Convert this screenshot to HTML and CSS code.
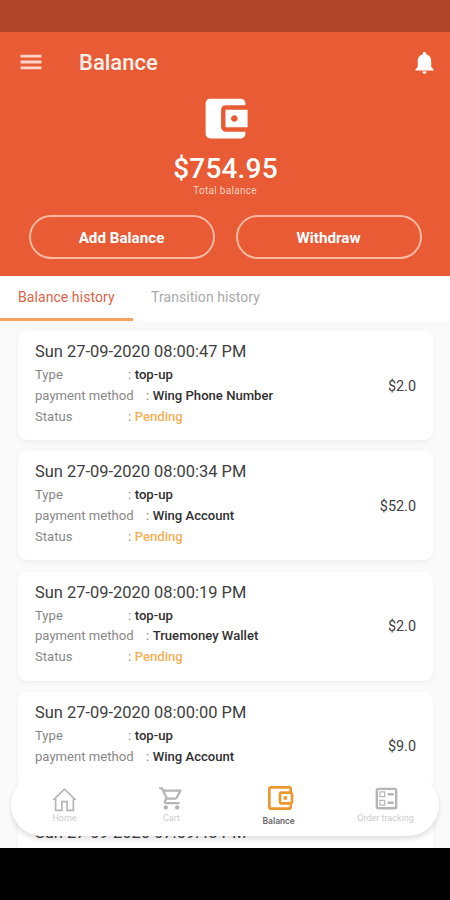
FILE: index.html
```html
<!DOCTYPE html>
<html lang="en">
<head>
<meta charset="utf-8">
<title>Balance</title>
<link rel="stylesheet" href="styles.css">
</head>
<body>
<div class="screen">
  <div class="status"></div>
  <header class="hero">
    <div class="appbar">
      <svg class="menu" viewBox="0 0 24 24"><path d="M3 18.300h18v-2.500H3v2.500zm0-5.050h18v-2.500H3v2.500zm0-7.550v2.500h18V5.700H3z"/></svg>
      <h1>Balance</h1>
      <svg class="bell" viewBox="0 0 24 24"><path d="M12 22c1.1 0 2-.9 2-2h-4c0 1.1.89 2 2 2zm6-6v-5c0-3.07-1.64-5.64-4.5-6.32V4c0-.83-.67-1.5-1.5-1.5s-1.5.67-1.5 1.5v.68C7.63 5.36 6 7.92 6 11v5l-2 2v1h16v-1l-2-2z"/></svg>
    </div>
    <div class="total">
      <svg viewBox="0 0 24 24"><path d="M21 18v1c0 1.1-.9 2-2 2H5c-1.11 0-2-.9-2-2V5c0-1.1.89-2 2-2h14c1.1 0 2 .9 2 2v1h-9c-1.11 0-2 .9-2 2v8c0 1.1.89 2 2 2h9zm-9-2h10V8H12v8zm4-2.5c-.83 0-1.5-.67-1.5-1.5s.67-1.5 1.5-1.5 1.5.67 1.5 1.5-.67 1.5-1.5 1.5z"/></svg>
      <div class="amount">$754.95</div>
      <div class="caption">Total balance</div>
    </div>
    <div class="actions"><button>Add Balance</button><button>Withdraw</button></div>
  </header>
  <nav class="tabs"><div class="tab active">Balance history</div><div class="tab">Transition history</div></nav>
  <main class="list">
    <article class="card"><div><h2>Sun 27-09-2020 08:00:47 PM</h2><p><span class="label">Type</span><i>:</i><b>top-up</b></p><p><span class="label wide">payment method</span><i>:</i><b>Wing Phone Number</b></p><p><span class="label">Status</span><i>:</i><b class="pending">Pending</b></p></div><div class="price">$2.0</div></article>
    <article class="card"><div><h2>Sun 27-09-2020 08:00:34 PM</h2><p><span class="label">Type</span><i>:</i><b>top-up</b></p><p><span class="label wide">payment method</span><i>:</i><b>Wing Account</b></p><p><span class="label">Status</span><i>:</i><b class="pending">Pending</b></p></div><div class="price">$52.0</div></article>
    <article class="card"><div><h2>Sun 27-09-2020 08:00:19 PM</h2><p><span class="label">Type</span><i>:</i><b>top-up</b></p><p><span class="label wide">payment method</span><i>:</i><b>Truemoney Wallet</b></p><p><span class="label">Status</span><i>:</i><b class="pending">Pending</b></p></div><div class="price">$2.0</div></article>
    <article class="card"><div><h2>Sun 27-09-2020 08:00:00 PM</h2><p><span class="label">Type</span><i>:</i><b>top-up</b></p><p><span class="label wide">payment method</span><i>:</i><b>Wing Account</b></p></div><div class="price">$9.0</div></article>
    <article class="card"><div><h2>Sun 27-09-2020 07:59:48 PM</h2></div></article>
  </main>
  <nav class="dock">
    <div class="item"><svg class="home" viewBox="0 0 24 24"><path d="M1.200 12.500 12 2 22.800 12.500M3.500 11v11.500h6V14h5v8.500h6V11"/></svg><span>Home</span></div>
    <div class="item"><svg class="cart" viewBox="0 0 24 24"><path d="M15.550 13c.75 0 1.410-.41 1.750-1.030l3.580-6.490c.37-.66-.11-1.480-.87-1.480H5.210l-.94-2H1v2h2l3.600 7.590-1.350 2.440C4.520 15.370 5.480 17 7 17h12v-2H7l1.100-2h7.450zM6.160 6h12.150l-2.760 5H8.530L6.160 6zM7 18c-1.100 0-1.990.9-1.990 2S5.900 22 7 22s2-.9 2-2-.9-2-2-2zm10 0c-1.100 0-1.990.9-1.990 2s.89 2 1.990 2 2-.9 2-2-.9-2-2-2z"/></svg><span>Cart</span></div>
    <div class="item current"><svg class="wallet" viewBox="0 0 24 24"><path d="M21 7.280V5c0-1.100-.9-2-2-2H5c-1.110 0-2 .9-2 2v14c0 1.100.89 2 2 2h14c1.100 0 2-.9 2-2v-2.280c.59-.35 1-.98 1-1.720V9c0-.74-.41-1.370-1-1.720zM20 9v6h-7V9h7zM5 19V5h14v2h-6c-1.100 0-2 .9-2 2v6c0 1.100.9 2 2 2h6v2H5z"/><circle cx="16" cy="12" r="1.500"/></svg><span>Balance</span></div>
    <div class="item"><svg class="ballot" viewBox="0 0 24 24"><path d="M13 7.500h5v2h-5zm0 7h5v2h-5zM19 3H5c-1.100 0-2 .9-2 2v14c0 1.100.9 2 2 2h14c1.100 0 2-.9 2-2V5c0-1.100-.9-2-2-2zm0 16H5V5h14v14zM11 6H6v5h5V6zm-1 4H7V7h3v3zm1 3H6v5h5v-5zm-1 4H7v-3h3v3z"/></svg><span>Order tracking</span></div>
  </nav>
</div>
</body>
</html>
```
FILE: styles.css
```css
* { box-sizing: border-box; }
body { margin: 0; background: #000; font-family: Roboto, sans-serif; }
svg { display: block; flex: none; fill: currentColor; }
h1, h2, p { margin: 0; font-weight: 400; }
.screen { position: relative; width: 450px; height: 848px; overflow: hidden; background: #fafafa; display: flex; flex-direction: column; }
.status { flex: none; height: 32px; background: #af452a; }
.hero { flex: none; height: 244px; background: #e85b35; color: #fff; }
.appbar { height: 60px; display: flex; align-items: center; padding: 1px 12px 0 17px; }
.menu { width: 28px; height: 28px; margin-top: -1px; color: #fdd6c9; }
h1 { margin-left: 34px; font-size: 22px; font-weight: 500; line-height: 28px; color: #fff0ea; }
.bell { width: 27px; height: 27px; margin-left: auto; }
.total { display: flex; flex-direction: column; align-items: center; }
.total svg { width: 53px; height: 53px; }
.amount { margin-top: 8px; font-size: 28px; line-height: 32px; font-weight: 500; letter-spacing: .2px; padding-left: 1px; }
.caption { font-size: 10px; line-height: 12px; color: #fbd0c1; letter-spacing: .3px; }
.actions { display: flex; gap: 21px; padding: 18px 28px 0 29px; }
.actions button { flex: 1; height: 44px; border: 2px solid #fbb9a2; border-radius: 22px; background: none; color: #fff; font: 700 15.200px Roboto, sans-serif; padding: 1px 1px 0 0; }
.tabs { flex: none; display: flex; height: 45px; background: #fff; font-size: 14px; line-height: 42px; letter-spacing: .07px; color: #aaa; }
.tab { padding: 0 18px; }
.tab.active { width: 133px; color: #dc6547; border-bottom: 3px solid #f2a45c; white-space: nowrap; }
.list { display: flex; flex-direction: column; gap: 11.300px; padding: 10px 17px 0 18px; }
.card { flex: none; height: 109px; padding: 10px 17px 0; display: flex; justify-content: space-between; background: #fff; border-radius: 9px; box-shadow: 0 2px 5px rgba(0,0,0,.05); }
.card h2 { font-size: 16.450px; line-height: 21px; margin-bottom: 3px; color: #404040; white-space: nowrap; }
.card p { display: flex; font-size: 13.100px; line-height: 20.800px; color: #888; white-space: nowrap; }
.label { width: 93px; }
.label.wide { width: 111px; }
.card i { width: 6.700px; font-style: normal; }
.card b { font-weight: 500; color: #303030; }
.card b.pending { color: #f3b057; }
.price { margin: 34.500px 0 0; font-size: 14.400px; line-height: 21px; color: #404040; }
.dock { position: absolute; left: 11px; top: 774px; width: 428px; height: 62px; border-radius: 31px; background: #fff; box-shadow: 0 3px 5px rgba(0,0,0,.13); display: flex; }
.dock::before { content: ""; position: absolute; left: 24px; right: 24px; top: -2px; height: 5px; background: #fff; }
.item { width: 107px; height: 62px; display: flex; flex-direction: column; align-items: center; color: #b5b5b5; font-size: 9px; line-height: 10px; }
.item span { margin-top: auto; margin-bottom: 13px; color: #ccc; white-space: nowrap; }
.home { width: 25px; height: 25px; margin-top: 13px; fill: none; stroke: currentColor; stroke-width: 1.600; }
.cart { width: 27px; height: 27px; margin-top: 11px; }
.wallet { width: 32px; height: 32px; margin-top: 8px; margin-left: 2px; }
.ballot { width: 29px; height: 29px; margin-top: 10px; margin-left: 1px; }
.current { color: #ee972f; }
.current span { color: #666; font-weight: 500; margin-bottom: 10px; }
```
